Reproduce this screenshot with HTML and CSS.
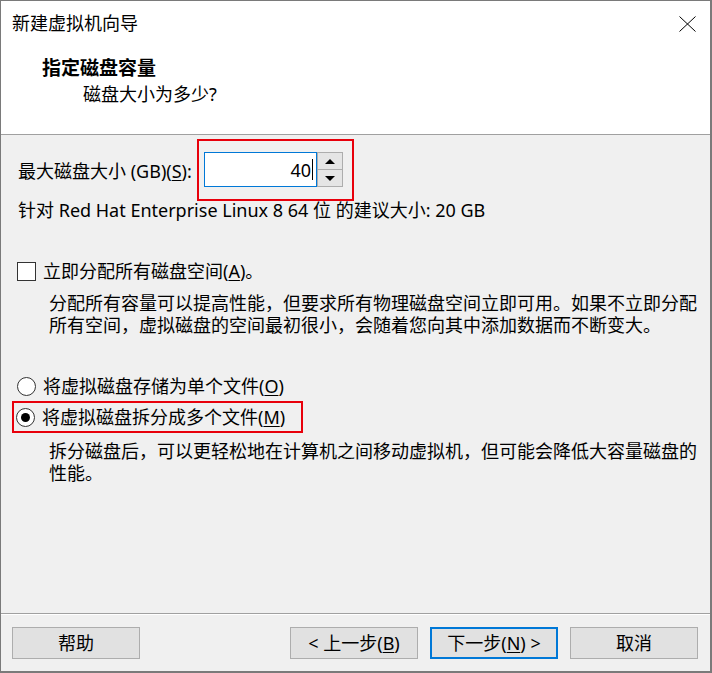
FILE: index.html
```html
<!DOCTYPE html>
<html lang="zh-CN">
<head>
<meta charset="utf-8">
<title>新建虚拟机向导</title>
<link rel="stylesheet" href="styles.css">
</head>
<body>
<div class="window">
  <div class="top">
    <div class="titlebar">
      <span class="title">新建虚拟机向导</span>
      <svg class="close" width="17" height="16" viewBox="0 0 17 16"><path d="M0.5 0.5 L16.5 15.5 M16.5 0.5 L0.5 15.5" stroke="#000" stroke-width="1" fill="none"/></svg>
    </div>
    <div class="header">
      <div class="h-title">指定磁盘容量</div>
      <div class="h-sub">磁盘大小为多少?</div>
    </div>
  </div>
  <div class="content">
    <div class="size-row">
      <span class="size-label">最大磁盘大小 (GB)(<u>S</u>):</span>
      <div class="hl hl-input">
        <div class="input"><span class="val">40</span><span class="caret"></span></div>
        <div class="spin">
          <div class="spin-btn"><span class="tri-up"></span></div>
          <div class="spin-btn"><span class="tri-down"></span></div>
        </div>
      </div>
    </div>
    <div class="rec">针对 Red Hat Enterprise Linux 8 64 位 的建议大小: 20 GB</div>
    <div class="check-row">
      <span class="checkbox"></span>
      <span class="opt-label">立即分配所有磁盘空间(<u>A</u>)。</span>
    </div>
    <div class="desc desc1">分配所有容量可以提高性能，但要求所有物理磁盘空间立即可用。如果不立即分配<br>所有空间，虚拟磁盘的空间最初很小，会随着您向其中添加数据而不断变大。</div>
    <div class="radio-row">
      <span class="radio"></span>
      <span class="opt-label">将虚拟磁盘存储为单个文件(<u>O</u>)</span>
    </div>
    <div class="hl hl-radio">
      <span class="radio checked"><span class="dot"></span></span>
      <span class="opt-label">将虚拟磁盘拆分成多个文件(<u>M</u>)</span>
    </div>
    <div class="desc desc2">拆分磁盘后，可以更轻松地在计算机之间移动虚拟机，但可能会降低大容量磁盘的<br>性能。</div>
  </div>
  <div class="footer">
    <button class="btn">帮助</button>
    <span class="spacer"></span>
    <button class="btn">&lt; 上一步(<u>B</u>)</button>
    <button class="btn btn-default">下一步(<u>N</u>) &gt;</button>
    <button class="btn">取消</button>
  </div>
</div>
</body>
</html>
```

FILE: styles.css
```css
* { box-sizing: border-box; }
html, body { margin: 0; padding: 0; }
body {
  width: 712px;
  height: 673px;
  font-family: "Noto Sans", "Noto Sans CJK SC", sans-serif;
  font-size: 18px;
  color: #000;
  background: #f0f0f0;
}
.window {
  width: 712px;
  height: 673px;
  border: 1px solid #7a7a7a;
  border-right-width: 2px;
  border-bottom-width: 2px;
  display: flex;
  flex-direction: column;
  background: #f0f0f0;
}
.top {
  height: 134px;
  flex: none;
  background: #fff;
  border-bottom: 1px solid #a0a0a0;
}
.titlebar {
  height: 44px;
  display: flex;
  align-items: center;
  justify-content: space-between;
  padding-left: 11px;
  padding-right: 14px;
}
.title {
  font-size: 18px;
  line-height: 24px;
}
.close { display: block; margin-top: 1px; }
.header {
  padding-top: 10px;
}
.h-title {
  padding-left: 41px;
  font-weight: bold;
  font-size: 19px;
  line-height: 26px;
}
.h-sub {
  padding-left: 82px;
  line-height: 26px;
}
.content {
  flex: 1;
  display: flex;
  flex-direction: column;
  align-items: flex-start;
}
.size-row {
  margin-top: 4px;
  display: flex;
  align-items: center;
  padding-left: 17px;
}
.size-label {
  width: 179px;
  white-space: nowrap;
  line-height: 24px;
  margin-top: 2px;
}
.hl {
  border: 2px solid #e8000b;
}
.hl-input {
  display: flex;
  padding: 11px 8px 11px 5px;
  width: 157px;
  height: 62px;
}
.input {
  width: 113px;
  height: 35px;
  background: #fff;
  border: 1px solid #0078d7;
  display: flex;
  align-items: center;
  justify-content: flex-end;
  padding-right: 3px;
}
.val { line-height: 22px; }
.caret {
  width: 1px;
  height: 21px;
  background: #000;
  margin-left: 1px;
}
.spin {
  width: 26px;
  height: 35px;
  display: flex;
  flex-direction: column;
  border: 1px solid #adadad;
}
.spin-btn {
  flex: 1;
  background: #e5e5e5;
  display: flex;
  align-items: center;
  justify-content: center;
}
.spin-btn + .spin-btn { border-top: 1px solid #adadad; }
.tri-up, .tri-down {
  width: 0;
  height: 0;
  border-left: 5px solid transparent;
  border-right: 5px solid transparent;
}
.tri-up { border-bottom: 5px solid #000; }
.tri-down { border-top: 5px solid #000; }
.rec {
  padding-left: 17px;
  line-height: 22px;
  white-space: nowrap;
  margin-top: -2px;
}
.check-row {
  margin-top: 38px;
  height: 24px;
  display: flex;
  align-items: center;
  padding-left: 16px;
}
.checkbox {
  width: 19px;
  height: 19px;
  border: 1px solid #333;
  background: #fff;
  flex: none;
}
.opt-label {
  margin-left: 7px;
  white-space: nowrap;
  line-height: 24px;
}
.desc {
  padding-left: 48px;
  line-height: 22px;
  white-space: nowrap;
}
.desc1 { margin-top: 9px; }
.radio-row {
  margin-top: 37px;
  height: 26px;
  display: flex;
  align-items: center;
  padding-left: 16px;
}
.radio {
  width: 19px;
  height: 19px;
  border-radius: 50%;
  border: 1px solid #333;
  background: #fff;
  flex: none;
  display: flex;
  align-items: center;
  justify-content: center;
}
.dot {
  width: 9px;
  height: 9px;
  border-radius: 50%;
  background: #000;
}
.hl-radio {
  margin-top: 2px;
  margin-left: 11px;
  width: 291px;
  height: 32px;
  display: flex;
  align-items: center;
  padding-left: 2px;
}
.desc2 { margin-top: 7px; }
.footer {
  height: 58px;
  flex: none;
  border-top: 1px solid #a0a0a0;
  box-shadow: inset 0 1px 0 #fff;
  display: flex;
  align-items: flex-start;
  padding: 13px 12px 0 11px;
}
.spacer { flex: 1; }
.btn {
  width: 128px;
  height: 32px;
  background: #e1e1e1;
  border: 1px solid #adadad;
  font-family: inherit;
  font-size: 18px;
  color: #000;
  padding: 0;
  line-height: 28px;
  margin: 0;
}
.btn + .btn { margin-left: 12px; }
.btn-default { border: 2px solid #0078d7; }
u { text-underline-offset: 2px; }
```
